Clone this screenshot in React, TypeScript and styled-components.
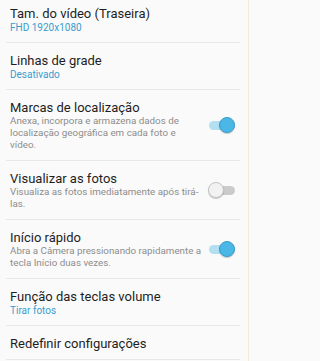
import React from 'react';
import styled, { createGlobalStyle } from 'styled-components';

const GlobalStyle = createGlobalStyle`
  html, body {
    margin: 0;
    padding: 0;
    background: #fafafa;
  }
  body {
    font-family: Roboto, "Noto Sans", "Liberation Sans", sans-serif;
  }
`;

const Page = styled.div`
  width: 249px;
  height: 361px;
  overflow: hidden;
  background: #fafafa;
  box-sizing: border-box;
  border-right: 1px solid #f8ead9;
`;

const Item = styled.div<{ $desc: boolean }>`
  display: flex;
  align-items: center;
  margin: 0 8px 0 6px;
  padding: 10px 0 ${(p) => (p.$desc ? '9px' : '8px')} 4px;
  border-bottom: 1px solid #e8e8e8;

  &:first-child {
    padding-top: 6px;
  }
`;

const TextCol = styled.div`
  flex: 1;
  min-width: 0;
  padding-right: 7px;
`;

const Title = styled.div`
  font-size: 13px;
  line-height: 15px;
  color: #1e1e1e;
`;

const Sub = styled.div`
  font-size: 10px;
  line-height: 13px;
  color: #3b9ccf;
`;

const Desc = styled.div`
  font-size: 9.8px;
  line-height: 12px;
  color: #8d8d8d;
`;

const Track = styled.div<{ $on: boolean }>`
  position: relative;
  flex: none;
  width: 26px;
  height: 9px;
  border-radius: 5px;
  margin-right: 5px;
  background: ${(p) => (p.$on ? '#b3dff3' : '#cbcbcb')};
`;

const Thumb = styled.div<{ $on: boolean }>`
  position: absolute;
  top: -4px;
  left: ${(p) => (p.$on ? '10px' : '-1px')};
  width: 16px;
  height: 16px;
  box-sizing: border-box;
  border-radius: 50%;
  background: ${(p) => (p.$on ? '#4bb7e6' : '#f2f2f2')};
  border: 1px solid ${(p) => (p.$on ? '#3a9dcb' : '#c4c4c4')};
  box-shadow: 0 1px 1px rgba(0, 0, 0, 0.2);
`;

const Toggle: React.FC<{ on: boolean }> = ({ on }) => (
  <Track $on={on}>
    <Thumb $on={on} />
  </Track>
);

type Setting = {
  title: string;
  sub?: string;
  desc?: string;
  toggle?: boolean;
};

const settings: Setting[] = [
  { title: 'Tam. do vídeo (Traseira)', sub: 'FHD 1920x1080' },
  { title: 'Linhas de grade', sub: 'Desativado' },
  {
    title: 'Marcas de localização',
    desc: 'Anexa, incorpora e armazena dados de localização geográfica em cada foto e vídeo.',
    toggle: true,
  },
  {
    title: 'Visualizar as fotos',
    desc: 'Visualiza as fotos imediatamente após tirá-las.',
    toggle: false,
  },
  {
    title: 'Início rápido',
    desc: 'Abra a Câmera pressionando rapidamente a tecla Início duas vezes.',
    toggle: true,
  },
  { title: 'Função das teclas volume', sub: 'Tirar fotos' },
  { title: 'Redefinir configurações' },
];

const App: React.FC = () => (
  <>
    <GlobalStyle />
    <Page>
      {settings.map((s) => (
        <Item key={s.title} $desc={!!s.desc}>
          <TextCol>
            <Title>{s.title}</Title>
            {s.sub && <Sub>{s.sub}</Sub>}
            {s.desc && <Desc>{s.desc}</Desc>}
          </TextCol>
          {s.toggle !== undefined && <Toggle on={s.toggle} />}
        </Item>
      ))}
    </Page>
  </>
);

export default App;
